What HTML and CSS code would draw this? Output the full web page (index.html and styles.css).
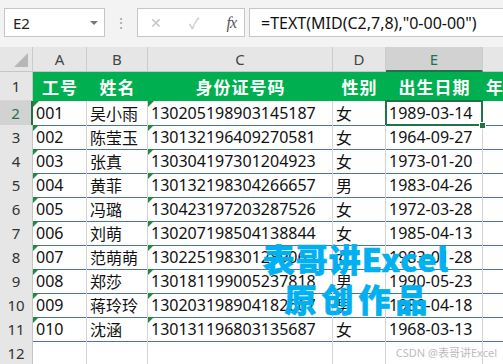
FILE: index.html
```html
<!DOCTYPE html>
<html lang="zh-CN">
<head>
    <meta charset="UTF-8">
    <meta name="viewport" content="width=device-width, initial-scale=1.0">
    <title>身份证号提取出生日期</title>
    <link rel="stylesheet" href="styles.css">
</head>
<body>
    <div class="toolbar">
        <div class="name-box">
            <span>E2</span>
            <span class="drop"></span>
        </div>
        <div class="grip">⋮</div>
        <div class="fx-buttons">
            <span class="btn-x">✕</span>
            <span class="btn-ok">✓</span>
            <span class="btn-fx">fx</span>
        </div>
        <div class="formula">=TEXT(MID(C2,7,8),"0-00-00")</div>
    </div>

    <div class="sheet">
        <div class="row col-heads">
            <div class="corner"><span class="corner-mark"></span></div>
            <div class="ch">A</div>
            <div class="ch">B</div>
            <div class="ch">C</div>
            <div class="ch">D</div>
            <div class="ch active">E</div>
            <div class="ch"></div>
        </div>
        <div class="row title">
            <div class="rh">1</div>
            <div class="cell center">工号</div>
            <div class="cell center">姓名</div>
            <div class="cell center">身份证号码</div>
            <div class="cell center">性别</div>
            <div class="cell center">出生日期</div>
            <div class="cell">年龄</div>
        </div>
        <div class="row">
            <div class="rh active">2</div>
            <div class="cell txt">001</div>
            <div class="cell">吴小雨</div>
            <div class="cell txt">130205198903145187</div>
            <div class="cell">女</div>
            <div class="cell selected">1989-03-14</div>
            <div class="cell"></div>
        </div>
        <div class="row">
            <div class="rh">3</div>
            <div class="cell txt">002</div>
            <div class="cell">陈莹玉</div>
            <div class="cell txt">130132196409270581</div>
            <div class="cell">女</div>
            <div class="cell">1964-09-27</div>
            <div class="cell"></div>
        </div>
        <div class="row">
            <div class="rh">4</div>
            <div class="cell txt">003</div>
            <div class="cell">张真</div>
            <div class="cell txt">130304197301204923</div>
            <div class="cell">女</div>
            <div class="cell">1973-01-20</div>
            <div class="cell"></div>
        </div>
        <div class="row">
            <div class="rh">5</div>
            <div class="cell txt">004</div>
            <div class="cell">黄菲</div>
            <div class="cell txt">130132198304266657</div>
            <div class="cell">男</div>
            <div class="cell">1983-04-26</div>
            <div class="cell"></div>
        </div>
        <div class="row">
            <div class="rh">6</div>
            <div class="cell txt">005</div>
            <div class="cell">冯璐</div>
            <div class="cell txt">130423197203287526</div>
            <div class="cell">女</div>
            <div class="cell">1972-03-28</div>
            <div class="cell"></div>
        </div>
        <div class="row">
            <div class="rh">7</div>
            <div class="cell txt">006</div>
            <div class="cell">刘萌</div>
            <div class="cell txt">130207198504138844</div>
            <div class="cell">女</div>
            <div class="cell">1985-04-13</div>
            <div class="cell"></div>
        </div>
        <div class="row">
            <div class="rh">8</div>
            <div class="cell txt">007</div>
            <div class="cell">范萌萌</div>
            <div class="cell txt">130225198301289063</div>
            <div class="cell">女</div>
            <div class="cell">1983-01-28</div>
            <div class="cell"></div>
        </div>
        <div class="row">
            <div class="rh">9</div>
            <div class="cell txt">008</div>
            <div class="cell">郑莎</div>
            <div class="cell txt">130181199005237818</div>
            <div class="cell">男</div>
            <div class="cell">1990-05-23</div>
            <div class="cell"></div>
        </div>
        <div class="row">
            <div class="rh">10</div>
            <div class="cell txt">009</div>
            <div class="cell">蒋玲玲</div>
            <div class="cell txt">130203198904182667</div>
            <div class="cell">男</div>
            <div class="cell">1989-04-18</div>
            <div class="cell"></div>
        </div>
        <div class="row">
            <div class="rh">11</div>
            <div class="cell txt">010</div>
            <div class="cell">沈涵</div>
            <div class="cell txt">130131196803135687</div>
            <div class="cell">女</div>
            <div class="cell">1968-03-13</div>
            <div class="cell"></div>
        </div>
        <div class="row empty">
            <div class="rh">12</div>
            <div class="cell"></div>
            <div class="cell"></div>
            <div class="cell"></div>
            <div class="cell"></div>
            <div class="cell"></div>
            <div class="cell"></div>
        </div>
    </div>

    <div class="watermark">
        <div class="wm-line1">表哥讲Excel</div>
        <div class="wm-line2">原创作品</div>
    </div>
    <div class="credit">CSDN @表哥讲Excel</div>
</body>
</html>
```

FILE: styles.css
```css
html, body {
    margin: 0;
    padding: 0;
}
body {
    width: 503px;
    height: 364px;
    overflow: hidden;
    position: relative;
    background-color: #ffffff;
    font-family: "Noto Sans", "Noto Sans CJK SC", sans-serif;
    color: #111;
}

/* formula bar */
.toolbar {
    height: 47px;
    box-sizing: border-box;
    padding: 8px 0 0 4px;
    display: flex;
    background-color: #f3f3f3;
}
.name-box, .fx-buttons, .formula {
    height: 29px;
    box-sizing: border-box;
    background-color: #ffffff;
    border: 1px solid #c6c6c6;
    display: flex;
    align-items: center;
}
.name-box {
    width: 101px;
    padding: 0 6px 0 8px;
    justify-content: space-between;
    font-size: 15px;
    color: #222;
}
.drop {
    width: 0;
    height: 0;
    border-left: 4px solid transparent;
    border-right: 4px solid transparent;
    border-top: 4px solid #777;
}
.grip {
    width: 32px;
    text-align: center;
    color: #a0a0a0;
    font-size: 14px;
    line-height: 29px;
}
.fx-buttons {
    width: 108px;
    padding: 0 8px 0 12px;
    justify-content: space-between;
    color: #c4c4c4;
    font-size: 15px;
}
.btn-x {
    font-size: 14px;
}
.btn-fx {
    font-family: "Liberation Serif", serif;
    font-style: italic;
    font-size: 16px;
    color: #555;
    letter-spacing: -1px;
}
.formula {
    flex: 1;
    margin-left: 4px;
    margin-right: -2px;
    padding-left: 11px;
    font-size: 16px;
    color: #111;
}

/* grid */
.row {
    display: grid;
    grid-template-columns: 33px 54px 61px 185px 53px 97px 40px;
    height: 24px;
}
.row > div {
    box-sizing: border-box;
    border-right: 1px solid #d4d4d4;
    border-bottom: 1px solid #4472c4;
    display: flex;
    align-items: center;
    position: relative;
    white-space: nowrap;
    overflow: visible;
}
.cell {
    padding-left: 3px;
    font-size: 16px;
}
.center {
    justify-content: center;
}

.col-heads {
    height: 25px;
}
.row.col-heads > div {
    background-color: #e6e6e6;
    border-right: 1px solid #cbcbcb;
    border-bottom: 1px solid #c6c6c6;
}
.ch {
    justify-content: center;
    font-size: 15px;
    color: #444;
}
.row.col-heads > .ch.active {
    background-color: #d2d2d2;
    color: #217346;
    border-bottom: 2px solid #217346;
}
.corner {
    justify-content: flex-end;
    align-items: flex-end !important;
    padding: 0 4px 4px 0;
}
.corner-mark {
    width: 0;
    height: 0;
    border-left: 14px solid transparent;
    border-bottom: 14px solid #b7b7b7;
}

.row > .rh {
    background-color: #e6e6e6;
    border-right: 1px solid #c6c6c6;
    border-bottom: 1px solid #d6d6d6;
    justify-content: center;
    font-size: 15px;
    color: #333;
}
.row > .rh.active {
    background-color: #d2d2d2;
    color: #217346;
    border-right: 2px solid #217346;
}

.title {
    height: 29px;
}
.row.title > .cell {
    background-color: #00b050;
    border-right: none;
    border-bottom: 1px solid #00b050;
    color: #ffffff;
    font-family: "Noto Sans CJK SC", sans-serif;
    font-weight: bold;
    font-size: 17px;
    letter-spacing: 1px;
}
.row.title > .cell.center {
    padding-left: 0;
}

.row.empty > .cell {
    border-bottom: 1px solid #d4d4d4;
}

/* text stored as number marker */
.txt::before {
    content: "";
    position: absolute;
    top: 0;
    left: 0;
    border-top: 6px solid #1f8b3b;
    border-right: 6px solid transparent;
}

/* active cell */
.selected::after {
    content: "";
    position: absolute;
    top: -1px;
    left: -1px;
    right: -1px;
    bottom: -1px;
    border: 2px solid #217346;
}
.selected::before {
    content: "";
    position: absolute;
    right: -4px;
    bottom: -4px;
    width: 5px;
    height: 5px;
    background-color: #217346;
    border: 1px solid #ffffff;
    z-index: 2;
}

/* overlay */
.watermark {
    position: absolute;
    left: 256px;
    top: 238px;
    width: 200px;
    text-align: center;
    color: #00b0f0;
    font-family: "Noto Sans CJK SC", sans-serif;
    font-weight: 900;
    font-size: 32px;
    line-height: 40px;
    -webkit-text-stroke: 0.6px #00b0f0;
}
.wm-line1 {
    letter-spacing: 1px;
}
.wm-line2 {
    letter-spacing: 5px;
    margin-right: -5px;
}
.credit {
    position: absolute;
    right: 6px;
    bottom: 4px;
    font-size: 11px;
    color: #bdbdbd;
}
```
